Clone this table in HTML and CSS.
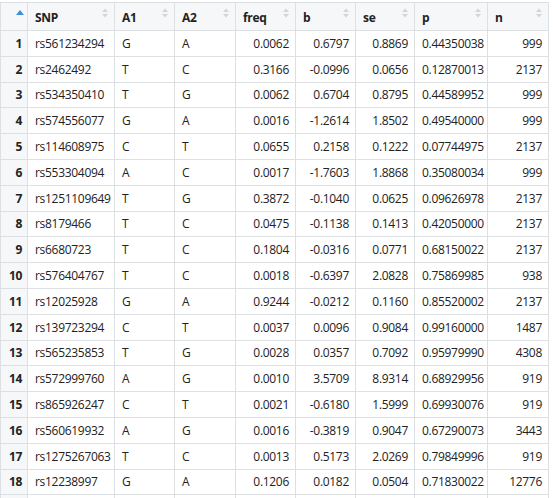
FILE: index.html
```html
<!DOCTYPE html>
<html>
<head>
<meta charset="utf-8">
<link rel="stylesheet" href="styles.css">
</head>
<body>
<table class="grid">
<colgroup>
<col class="c-rn"><col class="c-snp"><col class="c-a1"><col class="c-a2"><col class="c-freq"><col class="c-b"><col class="c-se"><col class="c-p"><col class="c-n">
</colgroup>
<thead>
<tr>
<th class="rn-h"><svg class="asc" width="8" height="5" viewBox="0 0 8 5"><path d="M0 5 L4 0 L8 5 Z" fill="#3c8fdb"/></svg></th>
<th>SNP<svg class="sort" width="6" height="10" viewBox="0 0 6 10"><path d="M0 4 L3 0.5 L6 4 Z M0 6 L3 9.5 L6 6 Z" fill="#d3d6d9"/></svg></th>
<th>A1<svg class="sort" width="6" height="10" viewBox="0 0 6 10"><path d="M0 4 L3 0.5 L6 4 Z M0 6 L3 9.5 L6 6 Z" fill="#d3d6d9"/></svg></th>
<th>A2<svg class="sort" width="6" height="10" viewBox="0 0 6 10"><path d="M0 4 L3 0.5 L6 4 Z M0 6 L3 9.5 L6 6 Z" fill="#d3d6d9"/></svg></th>
<th>freq<svg class="sort" width="6" height="10" viewBox="0 0 6 10"><path d="M0 4 L3 0.5 L6 4 Z M0 6 L3 9.5 L6 6 Z" fill="#d3d6d9"/></svg></th>
<th>b<svg class="sort" width="6" height="10" viewBox="0 0 6 10"><path d="M0 4 L3 0.5 L6 4 Z M0 6 L3 9.5 L6 6 Z" fill="#d3d6d9"/></svg></th>
<th>se<svg class="sort" width="6" height="10" viewBox="0 0 6 10"><path d="M0 4 L3 0.5 L6 4 Z M0 6 L3 9.5 L6 6 Z" fill="#d3d6d9"/></svg></th>
<th>p<svg class="sort" width="6" height="10" viewBox="0 0 6 10"><path d="M0 4 L3 0.5 L6 4 Z M0 6 L3 9.5 L6 6 Z" fill="#d3d6d9"/></svg></th>
<th>n<svg class="sort" width="6" height="10" viewBox="0 0 6 10"><path d="M0 4 L3 0.5 L6 4 Z M0 6 L3 9.5 L6 6 Z" fill="#d3d6d9"/></svg></th>
</tr>
</thead>
<tbody>
<tr><td class="rn">1</td><td>rs561234294</td><td>G</td><td>A</td><td class="num">0.0062</td><td class="num">0.6797</td><td class="num">0.8869</td><td>0.44350038</td><td class="num">999</td></tr>
<tr><td class="rn">2</td><td>rs2462492</td><td>T</td><td>C</td><td class="num">0.3166</td><td class="num">-0.0996</td><td class="num">0.0656</td><td>0.12870013</td><td class="num">2137</td></tr>
<tr><td class="rn">3</td><td>rs534350410</td><td>T</td><td>G</td><td class="num">0.0062</td><td class="num">0.6704</td><td class="num">0.8795</td><td>0.44589952</td><td class="num">999</td></tr>
<tr><td class="rn">4</td><td>rs574556077</td><td>G</td><td>A</td><td class="num">0.0016</td><td class="num">-1.2614</td><td class="num">1.8502</td><td>0.49540000</td><td class="num">999</td></tr>
<tr><td class="rn">5</td><td>rs114608975</td><td>C</td><td>T</td><td class="num">0.0655</td><td class="num">0.2158</td><td class="num">0.1222</td><td>0.07744975</td><td class="num">2137</td></tr>
<tr><td class="rn">6</td><td>rs553304094</td><td>A</td><td>C</td><td class="num">0.0017</td><td class="num">-1.7603</td><td class="num">1.8868</td><td>0.35080034</td><td class="num">999</td></tr>
<tr><td class="rn">7</td><td>rs1251109649</td><td>T</td><td>G</td><td class="num">0.3872</td><td class="num">-0.1040</td><td class="num">0.0625</td><td>0.09626978</td><td class="num">2137</td></tr>
<tr><td class="rn">8</td><td>rs8179466</td><td>T</td><td>C</td><td class="num">0.0475</td><td class="num">-0.1138</td><td class="num">0.1413</td><td>0.42050000</td><td class="num">2137</td></tr>
<tr><td class="rn">9</td><td>rs6680723</td><td>T</td><td>C</td><td class="num">0.1804</td><td class="num">-0.0316</td><td class="num">0.0771</td><td>0.68150022</td><td class="num">2137</td></tr>
<tr><td class="rn">10</td><td>rs576404767</td><td>T</td><td>C</td><td class="num">0.0018</td><td class="num">-0.6397</td><td class="num">2.0828</td><td>0.75869985</td><td class="num">938</td></tr>
<tr><td class="rn">11</td><td>rs12025928</td><td>G</td><td>A</td><td class="num">0.9244</td><td class="num">-0.0212</td><td class="num">0.1160</td><td>0.85520002</td><td class="num">2137</td></tr>
<tr><td class="rn">12</td><td>rs139723294</td><td>C</td><td>T</td><td class="num">0.0037</td><td class="num">0.0096</td><td class="num">0.9084</td><td>0.99160000</td><td class="num">1487</td></tr>
<tr><td class="rn">13</td><td>rs565235853</td><td>T</td><td>G</td><td class="num">0.0028</td><td class="num">0.0357</td><td class="num">0.7092</td><td>0.95979990</td><td class="num">4308</td></tr>
<tr><td class="rn">14</td><td>rs572999760</td><td>A</td><td>G</td><td class="num">0.0010</td><td class="num">3.5709</td><td class="num">8.9314</td><td>0.68929956</td><td class="num">919</td></tr>
<tr><td class="rn">15</td><td>rs865926247</td><td>C</td><td>T</td><td class="num">0.0021</td><td class="num">-0.6180</td><td class="num">1.5999</td><td>0.69930076</td><td class="num">919</td></tr>
<tr><td class="rn">16</td><td>rs560619932</td><td>A</td><td>G</td><td class="num">0.0016</td><td class="num">-0.3819</td><td class="num">0.9047</td><td>0.67290073</td><td class="num">3443</td></tr>
<tr><td class="rn">17</td><td>rs1275267063</td><td>T</td><td>C</td><td class="num">0.0013</td><td class="num">0.5173</td><td class="num">2.0269</td><td>0.79849996</td><td class="num">919</td></tr>
<tr><td class="rn">18</td><td>rs12238997</td><td>G</td><td>A</td><td class="num">0.1206</td><td class="num">0.0182</td><td class="num">0.0504</td><td>0.71830022</td><td class="num">12776</td></tr>
<tr><td class="rn"></td><td></td><td></td><td></td><td></td><td></td><td></td><td></td><td></td></tr>
</tbody>
</table>
</body>
</html>
```
FILE: styles.css
```css
html, body {
  margin: 0;
  padding: 0;
  background: #ffffff;
  overflow: hidden;
}
body {
  padding-top: 2px;
  font-family: "Open Sans", "Noto Sans", sans-serif;
  font-size: 12px;
  letter-spacing: -0.3px;
  color: #222;
}
.grid {
  border-collapse: collapse;
  table-layout: fixed;
  width: 548px;
}
.c-rn { width: 27px; }
.c-snp { width: 87px; }
.c-a1 { width: 60px; }
.c-a2 { width: 61px; }
.c-freq { width: 60px; }
.c-b { width: 60px; }
.c-se { width: 59px; }
.c-p { width: 73px; }
.c-n { width: 61px; }

.grid th, .grid td {
  border: 1px solid #dde0e3;
  padding: 0 6px;
  white-space: nowrap;
  overflow: hidden;
}
.grid th {
  position: relative;
  height: 26px;
  background: #f6f7f8;
  text-align: left;
  font-weight: 700;
  padding-left: 7px;
  padding-top: 1px;
}
.grid td {
  height: 24.8px;
  padding-left: 7px;
}
.grid td.num { text-align: right; }
.grid td.rn {
  background: #f6f7f8;
  font-weight: 700;
  text-align: right;
  padding: 0 5px 0 0;
}
.sort {
  position: absolute;
  right: 6px;
  top: 5px;
}
.asc {
  position: absolute;
  left: 15px;
  top: 7px;
}
.rn-h { padding: 0; }
```
